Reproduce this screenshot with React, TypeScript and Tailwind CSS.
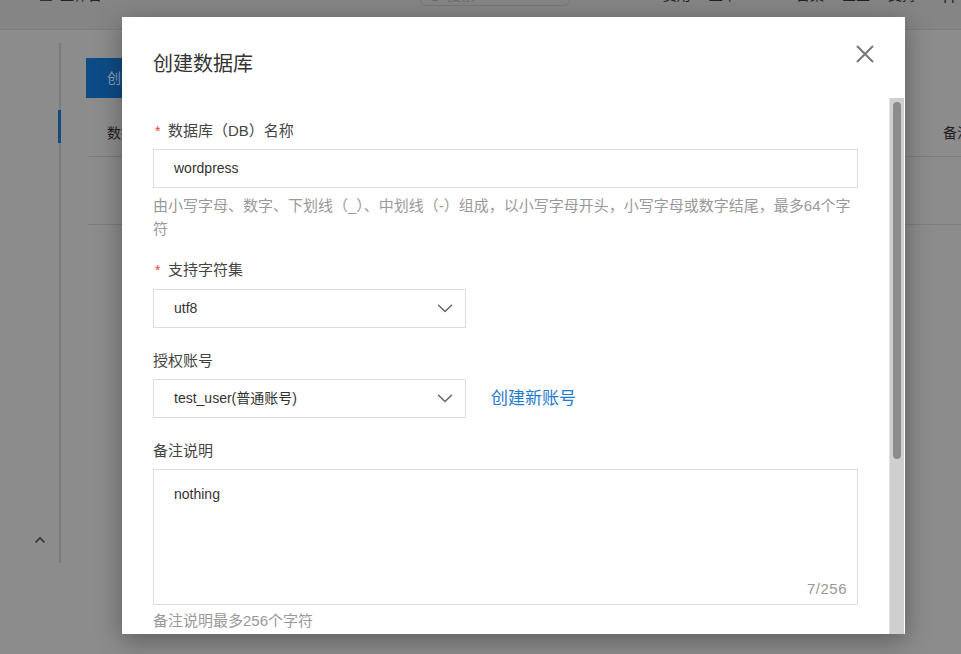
import React from "react";

const Chevron = () => (
  <svg width="16" height="9" viewBox="0 0 16 9" fill="none">
    <path d="M1.5 1.2L8 7.5l6.5-6.3" stroke="#666" strokeWidth="1.5" strokeLinecap="round" strokeLinejoin="round" />
  </svg>
);

const Label = ({ req, children, className = "" }: { req?: boolean; children: React.ReactNode; className?: string }) => (
  <div className={`flex items-center h-[20px] text-[15px] leading-[20px] text-[#444] ${className}`}>
    {req && <span className="text-[#e5483b] w-[15px] pl-[2px] text-[14px]">*</span>}
    <span>{children}</span>
  </div>
);

export default function App() {
  return (
    <div className="relative w-[961px] h-[654px] overflow-hidden bg-[#8c8c8c] font-['Liberation_Sans','Noto_Sans_CJK_SC',sans-serif]">
      {/* background page (dimmed) */}
      <div className="h-[30px] overflow-hidden bg-[#858585] border-b border-[#7c7c7c] flex text-[14px] text-[#222]">
        <div className="flex items-center gap-[8px] pl-[40px] -mt-[15px] h-[20px]">
          <span className="w-[12px] h-[12px] border-[2px] border-[#333]" />
          <span>工作台</span>
        </div>
        <div className="ml-[318px] -mt-[16px] w-[150px] h-[22px] border border-[#777] rounded-[6px] flex items-center pl-[8px] gap-[6px] text-[#6c6c6c]">
          <span className="w-[12px] h-[12px] rounded-full border-[2px] border-[#666]" />
          <span>搜索</span>
        </div>
        <div className="ml-auto flex gap-[18px] -mt-[15px] h-[20px] items-center pr-[2px]">
          <span>费用</span>
          <span>工单</span>
          <span>ICP</span>
          <span>备案</span>
          <span>企业</span>
          <span>支持</span>
          <span>App</span>
        </div>
      </div>
      <div className="flex">
        <div className="w-[61px] shrink-0 flex flex-col items-end">
          <div className="relative mt-[13px] h-[520px] w-[2px] bg-[#7a7a7a]">
            <div className="absolute left-[-1px] top-[67px] w-[3px] h-[33px] bg-[#164a7a]" />
          </div>
        </div>
        <div className="flex-1 pl-[25px]">
          <div className="mt-[28px] w-[120px] h-[40px] bg-[#0d4b86] text-[#8ea4bb] text-[14px] flex items-center pl-[21px]">创建数据库</div>
          <div className="ml-[2px] mt-[12px] h-[47px] border-b border-[#7d7d7d] flex items-center justify-between text-[14px] text-[#1e1e1e] pl-[19px] pr-[0px]">
            <span>数据库名</span>
            <span className="w-[18px] overflow-hidden whitespace-nowrap">备注</span>
          </div>
          <div className="ml-[2px] h-[68px] border-b border-[#7d7d7d]" />
        </div>
      </div>
      <div className="absolute left-[34px] top-[536px] w-[12px] h-[10px]">
        <svg width="12" height="8" viewBox="0 0 12 8" fill="none">
          <path d="M1.5 6.5L6 2l4.5 4.5" stroke="#333" strokeWidth="1.6" />
        </svg>
      </div>

      {/* modal */}
      <div className="absolute left-[122px] top-[17px] w-[783px] h-[617px] bg-white shadow-[0_6px_24px_rgba(0,0,0,0.35)] flex flex-col">
        <div className="relative h-[81px] shrink-0 pl-[31px] pt-[33px]">
          <div className="text-[20px] leading-[28px] text-[#333]">创建数据库</div>
          <svg className="absolute right-[31px] top-[28px]" width="18" height="18" viewBox="0 0 18 18" fill="none">
            <path d="M1 1l16 16M17 1L1 17" stroke="#777" strokeWidth="2" />
          </svg>
        </div>
        <div className="flex-1 flex overflow-hidden">
          <div className="pl-[31px] w-[736px] shrink-0">
            <Label req className="mt-[23px]">数据库（DB）名称</Label>
            <div className="mt-[8px] h-[39px] border border-[#dcdcdc] flex items-center pl-[20px] text-[14px] text-[#333]">wordpress</div>
            <div className="mt-[6px] text-[15px] leading-[23px] text-[#999]">
              <span className="whitespace-nowrap">由小写字母、数字、下划线（_）、中划线（-）组成，以小写字母开头，小写字母或数字结尾，最多64个字</span>
              <br />
              <span>符</span>
            </div>
            <Label req className="mt-[20px]">支持字符集</Label>
            <div className="mt-[9px] w-[313px] h-[39px] border border-[#dcdcdc] flex items-center justify-between pl-[20px] pr-[12px] text-[14px] text-[#333]">
              <span>utf8</span>
              <Chevron />
            </div>
            <Label className="mt-[23px]">授权账号</Label>
            <div className="mt-[8px] flex items-center">
              <div className="w-[313px] h-[39px] border border-[#dcdcdc] flex items-center justify-between pl-[20px] pr-[12px] text-[14px] text-[#333]">
                <span>test_user(普通账号)</span>
                <Chevron />
              </div>
              <span className="ml-[25px] text-[17px] text-[#1f7ad0]">创建新账号</span>
            </div>
            <Label className="mt-[23px]">备注说明</Label>
            <div className="relative mt-[8px] h-[136px] border border-[#dcdcdc] pl-[20px] pt-[14px] text-[14px] leading-[20px] text-[#333]">
              <span>nothing</span>
              <span className="absolute right-[10px] bottom-[5px] text-[15px] tracking-[0.5px] text-[#999]">7/256</span>
            </div>
            <div className="mt-[6px] text-[15px] leading-[20px] text-[#999]">备注说明最多256个字符</div>
          </div>
          <div className="ml-[31px] w-[15px] bg-[#cfcfcf] border-l border-[#e2e2e2] flex justify-center">
            <div className="mt-[4px] w-[8px] h-[357px] rounded-full bg-[#8c8c8c]" />
          </div>
        </div>
      </div>
    </div>
  );
}
